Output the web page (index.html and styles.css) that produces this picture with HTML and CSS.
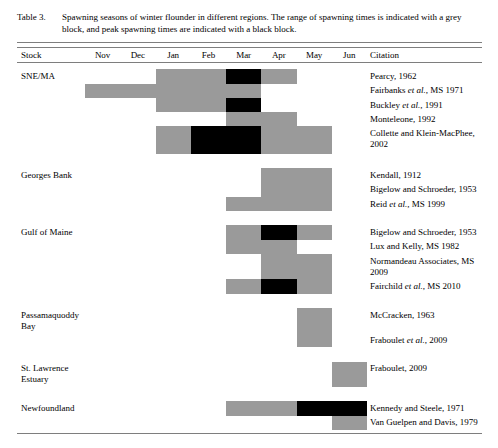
FILE: index.html
```html
<!DOCTYPE html>
<html lang="en">
<head>
<meta charset="utf-8">
<title>Table 3</title>
<link rel="stylesheet" href="styles.css">
</head>
<body>
<div class="page">
  <div class="caption">
    <span class="label">Table 3.</span>
    <p class="desc">Spawning seasons of winter flounder in different regions. The range of spawning times is indicated with a grey block, and peak spawning times are indicated with a black block.</p>
  </div>
  <div class="frame">
    <table class="spawn">
      <colgroup>
        <col class="c-stock">
        <col class="c-m"><col class="c-m"><col class="c-m"><col class="c-m">
        <col class="c-m"><col class="c-m"><col class="c-m"><col class="c-m">
        <col class="c-cit">
      </colgroup>
      <thead>
        <tr>
          <th class="stock">Stock</th>
          <th>Nov</th><th>Dec</th><th>Jan</th><th>Feb</th>
          <th>Mar</th><th>Apr</th><th>May</th><th>Jun</th>
          <th class="cit">Citation</th>
        </tr>
      </thead>
      <tbody>
        <tr class="lead"><td colspan="10"></td></tr>

        <tr><td class="stock">SNE/MA</td><td></td><td></td><td class="g"></td><td class="g"></td><td class="b"></td><td class="g"></td><td></td><td></td><td class="cit">Pearcy, 1962</td></tr>
        <tr><td class="stock"></td><td class="g"></td><td class="g"></td><td class="g"></td><td class="g"></td><td class="g"></td><td></td><td></td><td></td><td class="cit">Fairbanks <i>et al.</i>, MS 1971</td></tr>
        <tr><td class="stock"></td><td></td><td></td><td class="g"></td><td class="g"></td><td class="b"></td><td></td><td></td><td></td><td class="cit">Buckley <i>et al.</i>, 1991</td></tr>
        <tr><td class="stock"></td><td></td><td></td><td></td><td></td><td class="g"></td><td class="g"></td><td></td><td></td><td class="cit">Monteleone, 1992</td></tr>
        <tr class="tall"><td class="stock"></td><td></td><td></td><td class="g"></td><td class="b"></td><td class="b"></td><td class="g"></td><td class="g"></td><td></td><td class="cit">Collette and Klein-MacPhee, 2002</td></tr>
        <tr class="gap"><td colspan="10"></td></tr>

        <tr><td class="stock">Georges Bank</td><td></td><td></td><td></td><td></td><td></td><td class="g"></td><td class="g"></td><td></td><td class="cit">Kendall, 1912</td></tr>
        <tr><td class="stock"></td><td></td><td></td><td></td><td></td><td></td><td class="g"></td><td class="g"></td><td></td><td class="cit">Bigelow and Schroeder, 1953</td></tr>
        <tr><td class="stock"></td><td></td><td></td><td></td><td></td><td class="g"></td><td class="g"></td><td class="g"></td><td></td><td class="cit">Reid <i>et al.</i>, MS 1999</td></tr>
        <tr class="gap"><td colspan="10"></td></tr>

        <tr><td class="stock">Gulf of Maine</td><td></td><td></td><td></td><td></td><td class="g"></td><td class="b"></td><td class="g"></td><td></td><td class="cit">Bigelow and Schroeder, 1953</td></tr>
        <tr><td class="stock"></td><td></td><td></td><td></td><td></td><td class="g"></td><td class="g"></td><td></td><td></td><td class="cit">Lux and Kelly, MS 1982</td></tr>
        <tr><td class="stock"></td><td></td><td></td><td></td><td></td><td></td><td class="g"></td><td class="g"></td><td></td><td class="cit">Normandeau Associates, MS 2009</td></tr>
        <tr><td class="stock"></td><td></td><td></td><td></td><td></td><td class="g"></td><td class="b"></td><td class="g"></td><td></td><td class="cit">Fairchild <i>et al.</i>, MS 2010</td></tr>
        <tr class="gap"><td colspan="10"></td></tr>

        <tr><td class="stock">Passamaquoddy Bay</td><td></td><td></td><td></td><td></td><td></td><td></td><td class="g"></td><td></td><td class="cit">McCracken, 1963</td></tr>
        <tr><td class="stock"></td><td></td><td></td><td></td><td></td><td></td><td></td><td class="g"></td><td></td><td class="cit">Fraboulet <i>et al.</i>, 2009</td></tr>
        <tr class="gap"><td colspan="10"></td></tr>

        <tr><td class="stock">St. Lawrence Estuary</td><td></td><td></td><td></td><td></td><td></td><td></td><td></td><td class="g"></td><td class="cit">Fraboulet, 2009</td></tr>
        <tr class="gap"><td colspan="10"></td></tr>

        <tr><td class="stock">Newfoundland</td><td></td><td></td><td></td><td></td><td class="g"></td><td class="g"></td><td class="b"></td><td class="b"></td><td class="cit">Kennedy and Steele, 1971</td></tr>
        <tr><td class="stock"></td><td></td><td></td><td></td><td></td><td></td><td></td><td></td><td class="g"></td><td class="cit">Van Guelpen and Davis, 1979</td></tr>
        <tr class="tail"><td colspan="10"></td></tr>
      </tbody>
    </table>
  </div>
</div>
</body>
</html>
```

FILE: styles.css
```css
html, body {
  margin: 0;
  padding: 0;
  background: #ffffff;
}

body {
  font-family: "Liberation Serif", "Times New Roman", serif;
  color: #000000;
}

.page {
  width: 465px;
  padding: 11px 0 0 17px;
}

.caption {
  display: flex;
  font-size: 9px;
  line-height: 12px;
  margin-bottom: 7px;
}

.caption .label {
  flex: 0 0 45px;
}

.caption .desc {
  margin: 0;
  flex: 1 1 auto;
}

.frame {
  border-top: 1px solid #7e7e7e;
  border-bottom: 1px solid #7e7e7e;
  padding-top: 4px;
}

.spawn {
  width: 465px;
  table-layout: fixed;
  border-collapse: separate;
  border-spacing: 0;
  font-size: 9px;
  line-height: 11px;
}

.c-stock { width: 68px; }
.c-m { width: 35.25px; }
.c-cit { width: 115px; }

.spawn th {
  font-weight: normal;
  text-align: center;
  line-height: 13.3px;
  padding: 1px 0 0;
  border-top: 1px solid #7e7e7e;
  border-bottom: 1px solid #7e7e7e;
  white-space: nowrap;
}

.spawn td {
  padding: 1.7px 0 1.6px;
  vertical-align: top;
}

.spawn tr.tall td {
  padding-bottom: 3.9px;
}

.spawn .stock {
  text-align: left;
  padding-left: 4px;
}

.spawn .cit {
  text-align: left;
  padding-left: 3px;
}

.spawn td.g { background: #9a9a9a; }
.spawn td.b { background: #000000; }

.spawn tr.lead td { height: 6px; padding: 0; line-height: 0; }
.spawn tr.gap td { height: 14.3px; padding: 0; line-height: 0; }
.spawn tr.tail td { height: 3.5px; padding: 0; line-height: 0; }
```
